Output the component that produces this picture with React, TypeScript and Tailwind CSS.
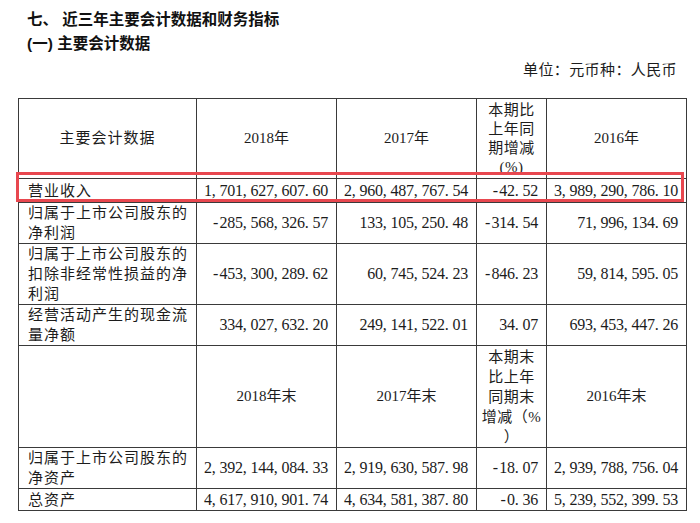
import React from 'react';

type Row = {
  label: string[];
  h: string;
  vals: string[];
};

const rows1: Row[] = [
  { label: ['营业收入'], h: 'h-[24px]', vals: ['1,701,627,607.60', '2,960,487,767.54', '-42.52', '3,989,290,786.10'] },
  { label: ['归属于上市公司股东的', '净利润'], h: 'h-[40px]', vals: ['-285,568,326.57', '133,105,250.48', '-314.54', '71,996,134.69'] },
  { label: ['归属于上市公司股东的', '扣除非经常性损益的净', '利润'], h: 'h-[60px]', vals: ['-453,300,289.62', '60,745,524.23', '-846.23', '59,814,595.05'] },
  { label: ['经营活动产生的现金流', '量净额'], h: 'h-[41px]', vals: ['334,027,632.20', '249,141,522.01', '34.07', '693,453,447.26'] },
];

const rows2: Row[] = [
  { label: ['归属于上市公司股东的', '净资产'], h: 'h-[41px]', vals: ['2,392,144,084.33', '2,919,630,587.98', '-18.07', '2,939,788,756.04'] },
  { label: ['总资产'], h: 'h-[22px]', vals: ['4,617,910,901.74', '4,634,581,387.80', '-0.36', '5,239,552,399.53'] },
];

// half-width cells like the original song-style font
function Num({ v }: { v: string }) {
  return (
    <span className="inline-flex text-[16px]">
      {v.split('').map((c, i) => (
        <span key={i} className={c === ',' || c === '.' ? 'w-[7.75px] text-left' : 'w-[7.75px] text-center'}>
          {c}
        </span>
      ))}
    </span>
  );
}

function Lines({ lines }: { lines: string[] }) {
  return (
    <>
      {lines.map((l, i) => (
        <div key={i}>{l}</div>
      ))}
    </>
  );
}

const cell = 'border-[1.5px] border-[#3a3a3a] p-0 align-middle';

function DataRow({ r }: { r: Row }) {
  return (
    <tr className={r.h}>
      <td className={`${cell} pl-[9px] text-left tracking-[1px] leading-[20px]`}>
        <Lines lines={r.label} />
      </td>
      {r.vals.map((v, i) => (
        <td key={i} className={`${cell} text-right pr-[8px] leading-[20px]`}>
          <Num v={v} />
        </td>
      ))}
    </tr>
  );
}

export default function App() {
  return (
    <div className="w-[700px] h-[523px] bg-white overflow-hidden pl-[18px] pt-[8px] text-[#1c1c1c]">
      <div className="pl-[9px] font-['Liberation_Sans','Noto_Sans_CJK_SC',sans-serif] font-bold text-[15.5px] leading-[24px] text-[#111]">
        <div>七、 近三年主要会计数据和财务指标</div>
        <div>(一) 主要会计数据</div>
      </div>
      <div className="w-[668px] pr-[9px] mt-[2px] text-right font-['Liberation_Serif','Noto_Sans_CJK_SC',serif] text-[15px] leading-[24px] tracking-[0.4px]">
        单位：元币种：人民币
      </div>

      <div className="relative mt-[16px] w-[668px]">
        <table className="w-[668px] table-fixed border-collapse font-['Liberation_Serif','Noto_Sans_CJK_SC',serif] text-[15px]">
          <colgroup>
            <col className="w-[178px]" />
            <col className="w-[140px]" />
            <col className="w-[140px]" />
            <col className="w-[70px]" />
            <col className="w-[140px]" />
          </colgroup>
          <tbody>
            <tr className="h-[80px]">
              <td className={`${cell} text-center tracking-[1px]`}>主要会计数据</td>
              <td className={`${cell} text-center`}>2018年</td>
              <td className={`${cell} text-center`}>2017年</td>
              <td className={`${cell} text-center leading-[19px] tracking-[0.5px]`}>
                <Lines lines={['本期比', '上年同', '期增减', '(%)']} />
              </td>
              <td className={`${cell} text-center`}>2016年</td>
            </tr>
            {rows1.map((r, i) => (
              <DataRow key={i} r={r} />
            ))}
            <tr className="h-[102px]">
              <td className={cell}></td>
              <td className={`${cell} text-center`}>2018年末</td>
              <td className={`${cell} text-center`}>2017年末</td>
              <td className={`${cell} text-center leading-[20px] tracking-[0.5px]`}>
                <Lines lines={['本期末', '比上年', '同期末', '增减（%', '）']} />
              </td>
              <td className={`${cell} text-center`}>2016年末</td>
            </tr>
            {rows2.map((r, i) => (
              <DataRow key={i} r={r} />
            ))}
          </tbody>
        </table>
        {/* highlight around the revenue row */}
        <div className="absolute left-[-2px] right-[2px] top-[74px] h-[30px] border-[3px] border-[#e8474f] pointer-events-none" />
      </div>
    </div>
  );
}
